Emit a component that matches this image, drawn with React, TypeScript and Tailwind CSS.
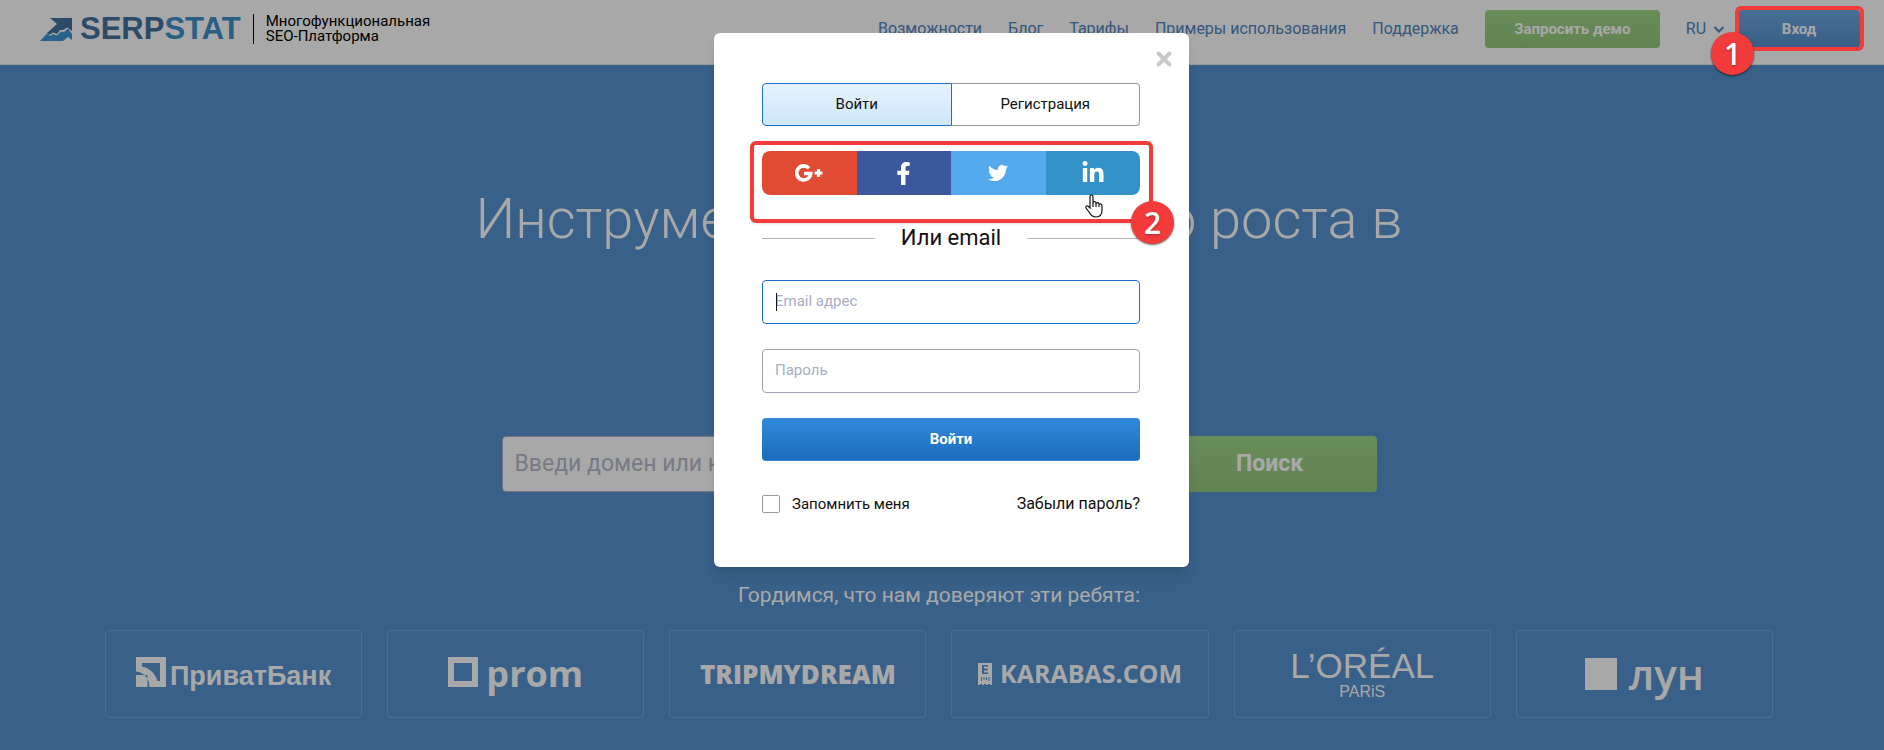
import { useState, type ReactNode } from "react";
import { FaFacebookF, FaLinkedinIn, FaTwitter } from "react-icons/fa";

const navLinks = ["Возможности", "Блог", "Тарифы", "Примеры использования", "Поддержка"];

const SerpstatMark = () => (
  <svg viewBox="0 0 32 23" className="h-[23px] w-8">
    <path d="M10 0H32V13L27 9.500L23 12L20 12L17 16L13 14.500L9 17L7 15L17 6Z" fill="#43729f" />
    <path d="M0 23L7 15.500L10 18L13 16L17 17.500L21 13.500L24 14L28 10.500L32 16V22L28 19L23 23Z" fill="#3f95d4" />
  </svg>
);

const GooglePlus = () => (
  <svg viewBox="0 0 28 18" className="h-[18px] w-7">
    <path d="M14 4.300A7 7 0 1 0 15.700 9.500H9" fill="none" stroke="white" strokeWidth="3.600" />
    <path d="M19.500 9H27.500M23.500 5V13" fill="none" stroke="white" strokeWidth="3.200" />
  </svg>
);

const HandCursor = () => (
  <svg viewBox="0 0 20 24" className="absolute top-[43px] left-[38px] z-10 h-6 w-5">
    <path
      d="M6 14V2.500C6 .5 9 .5 9 2.500V9C9 7 12 7 12 9V10C12 8.200 15 8.200 15 10V11C15 9.500 18 9.500 18 11.500V16C18 20 16 23 12 23C8 23 7 21 5 18L2 14C1 12 3 11 4.500 12.500Z"
      fill="white"
      stroke="#101020"
      strokeWidth="1.200"
    />
    <path d="M9 9V13M12 10V13M15 11V13" stroke="#101020" strokeWidth="1.200" />
  </svg>
);

const Badge = ({ children }: { children: ReactNode }) => (
  <span className="flex size-[43px] items-center justify-center rounded-full bg-[#f33b3c] font-['Open_Sans',sans-serif] text-3xl font-semibold text-white shadow-[0_1px_2px_rgba(0,0,0,0.6)] text-shadow-md">
    {children}
  </span>
);

const Header = () => (
  <header className="flex h-[65px] items-center border-b border-[#e8e8e8] bg-white pr-6 pb-1.5 pl-10">
    <a href="#" className="flex items-center">
      <SerpstatMark />
      <span className="ml-2 font-['Liberation_Sans',sans-serif] text-[31px] font-bold text-[#43729f]">
        SERP<span className="text-[#3f8fca]">STAT</span>
      </span>
    </a>
    <p className="ml-3 border-l border-black pl-3 text-[15px] leading-[15px] text-black">
      Многофункциональная
      <br />
      SEO-Платформа
    </p>
    <nav className="ml-auto flex items-center gap-[26px] text-base text-[#4f86c0]">
      {navLinks.map((link) => (
        <a key={link} href="#">
          {link}
        </a>
      ))}
      <button className="h-[38px] w-[175px] rounded bg-linear-to-b from-[#9ed788] to-[#94c67c] text-[15px] font-bold text-white">
        Запросить демо
      </button>
      <button className="flex items-center gap-2">
        RU
        <svg viewBox="0 0 10 7" className="h-[7px] w-2.5">
          <path d="M.5 1L5 5.500L9.500 1" fill="none" stroke="currentColor" strokeWidth="2" />
        </svg>
      </button>
    </nav>
    <button className="ml-3.5 h-[38px] w-[122px] rounded bg-linear-to-b from-[#6ba9e4] to-[#5890cc] text-[15px] font-bold text-white">
      Вход
    </button>
  </header>
);

const clients: { name: string; logo: ReactNode }[] = [
  {
    name: "ПриватБанк",
    logo: (
      <>
        <svg viewBox="0 0 30 30" className="mb-1 size-[30px]">
          <path
            d="M0 0H30V30H0ZM6 6V9.500C14 11 19.500 17 21.500 24H24V6ZM0 14.500C8 15.500 13.500 21 13.500 30H11.500V18H0Z"
            fill="currentColor"
            fillRule="evenodd"
          />
        </svg>
        <span className="ml-1 pt-1 font-['Liberation_Sans',sans-serif] text-[27px] font-bold">ПриватБанк</span>
      </>
    ),
  },
  {
    name: "prom",
    logo: (
      <>
        <span className="mb-1 size-[30px] border-[6px] border-white" />
        <span className="ml-2 font-['Open_Sans',sans-serif] text-4xl font-bold">prom</span>
      </>
    ),
  },
  {
    name: "TRIPMYDREAM",
    logo: <span className="font-['Open_Sans',sans-serif] text-[26px] font-extrabold">TRIPMYDREAM</span>,
  },
  {
    name: "KARABAS.COM",
    logo: (
      <>
        <svg viewBox="0 0 14 22" className="h-[22px] w-3.5">
          <path
            d="M0 0H14V22H12V21H10V22H8V21H6V22H4V21H2V22H0ZM4 2V11H10V9.500H6V7.500H9.500V5.500H6V3.500H10V2ZM3 14V18H4V14ZM5.500 14V17H6.500V14ZM8 14V17H9V14ZM10.500 14V18H11.500V14Z"
            fill="currentColor"
            fillRule="evenodd"
          />
        </svg>
        <span className="ml-2 font-['Open_Sans',sans-serif] text-[25px] font-bold">KARABAS.COM</span>
      </>
    ),
  },
  {
    name: "L’ORÉAL",
    logo: (
      <div className="flex flex-col items-center font-['Liberation_Sans',sans-serif]">
        <span className="text-[35px] leading-9">L’ORÉAL</span>
        <span className="text-base leading-4">PARiS</span>
      </div>
    ),
  },
  {
    name: "лун",
    logo: (
      <>
        <span className="size-8 bg-white" />
        <span className="ml-3 font-['Open_Sans',sans-serif] text-[42px] leading-[48px] font-semibold">лун</span>
      </>
    ),
  },
];

const Hero = () => (
  <main className="flex flex-col items-center bg-[#5592cf] pr-[111px] pb-8 pl-[105px] text-white">
    <h1 className="mt-[117px] max-w-[1000px] text-center text-[56px] leading-[74px] font-light">
      Инструменты для быстрого роста в поиске
    </h1>
    <form className="mt-[106px] flex h-14 w-[875px]">
      <input
        aria-label="Домен"
        placeholder="Введи домен или ключевую фразу"
        className="min-w-0 flex-1 rounded-l border border-[#b0b4c4] bg-white px-3 text-[23px] placeholder:text-[#b5b9cc]"
      />
      <button className="w-[214px] rounded-r bg-linear-to-b from-[#9ed788] to-[#94c67c] text-[23px] font-bold">
        Поиск
      </button>
    </form>
    <p className="mt-[89px] text-[21px] leading-7">Гордимся, что нам доверяют эти ребята:</p>
    <ul className="mt-[21px] grid w-full grid-cols-6 gap-[25px]">
      {clients.map((client) => (
        <li key={client.name} className="flex h-22 items-center justify-center rounded border border-white/20">
          {client.logo}
        </li>
      ))}
    </ul>
  </main>
);

const socials = [
  { name: "Google+", color: "bg-[#e04b32]", icon: <GooglePlus /> },
  { name: "Facebook", color: "bg-[#3b579d]", icon: <FaFacebookF size={23} /> },
  { name: "Twitter", color: "bg-[#55a9ed]", icon: <FaTwitter size={20} /> },
  { name: "LinkedIn", color: "bg-[#3393c8]", icon: <FaLinkedinIn size={24} /> },
];

const LoginModal = () => {
  const [remember, setRemember] = useState(false);

  return (
    <div role="dialog" className="relative w-[475px] rounded-md bg-white pt-[50px] pr-[49px] pb-[51px] pl-12 text-[#111] shadow-lg">
      <button aria-label="Закрыть" className="absolute top-[17px] right-4">
        <svg viewBox="0 0 18 18" className="size-[18px]">
          <path d="M3.500 3.500L14.500 14.500M14.500 3.500L3.500 14.500" stroke="#c9c9c9" strokeWidth="4" strokeLinecap="round" />
        </svg>
      </button>

      <div className="flex h-[43px] text-[15px]">
        <button className="flex-1 rounded-l border border-[#1c6fc4] bg-linear-to-b from-[#e5f2fd] to-[#cde7fd]">
          Войти
        </button>
        <button className="flex-1 rounded-r border border-l-0 border-[#999]">Регистрация</button>
      </div>

      <div className="mt-[25px] flex h-11">
        {socials.map((social) => (
          <button
            key={social.name}
            aria-label={social.name}
            className={`${social.color} relative flex flex-1 items-center justify-center text-white first:rounded-l-lg last:rounded-r-lg`}
          >
            {social.icon}
            {social.name === "LinkedIn" && <HandCursor />}
          </button>
        ))}
      </div>

      <div className="mt-[29px] flex items-center gap-[26px] text-[22px] leading-7">
        <span className="h-px flex-1 bg-[#b5b5b5]" />
        Или email
        <span className="h-px flex-1 bg-[#b5b5b5]" />
      </div>

      <div className="relative mt-7">
        <input
          aria-label="Email адрес"
          placeholder="Email адрес"
          className="peer h-11 w-full rounded border border-[#1c6fc4] px-3 pb-0.5 text-[15px] outline-none placeholder:text-[#a8adc4]"
        />
        <span className="absolute top-[13px] left-3.5 h-[18px] w-px bg-[#101020] peer-focus:hidden" />
      </div>
      <input
        aria-label="Пароль"
        type="password"
        placeholder="Пароль"
        className="mt-[25px] h-11 w-full rounded border border-[#9ca3ba] px-3 pb-0.5 text-[15px] placeholder:text-[#a8adc4]"
      />
      <button className="mt-[25px] h-[43px] w-full rounded border-b border-[#2f84d6] bg-linear-to-b from-[#3289db] to-[#1b6cbe] text-[15px] font-bold text-white">
        Войти
      </button>

      <div className="mt-[31px] flex items-center justify-between text-base">
        <label className="flex items-center gap-3 text-[15px]">
          <input
            type="checkbox"
            checked={remember}
            onChange={(e) => setRemember(e.target.checked)}
            className="size-[18px] appearance-none rounded-xs border border-[#999] checked:bg-[#1c6fc4]"
          />
          Запомнить меня
        </label>
        <a href="#">Забыли пароль?</a>
      </div>
    </div>
  );
};

const App = () => (
  <div className="relative min-h-screen bg-[#5592cf] font-[Roboto,sans-serif]">
    <Header />
    <Hero />
    <div className="absolute inset-0 flex items-start justify-center bg-black/34 pt-[33px] pl-[19px]">
      <div className="relative">
        <LoginModal />
        <div className="pointer-events-none absolute top-[108px] right-9 left-9 h-[82px] rounded-md border-4 border-[#f33b3c] shadow-sm" />
        <div className="absolute top-[168px] left-[417px]">
          <Badge>2</Badge>
        </div>
      </div>
    </div>
    <div className="pointer-events-none absolute top-1.5 right-5 h-[45px] w-[129px] rounded-md border-4 border-[#f33b3c]" />
    <div className="absolute top-8 right-[130px]">
      <Badge>1</Badge>
    </div>
  </div>
);

export default App;
